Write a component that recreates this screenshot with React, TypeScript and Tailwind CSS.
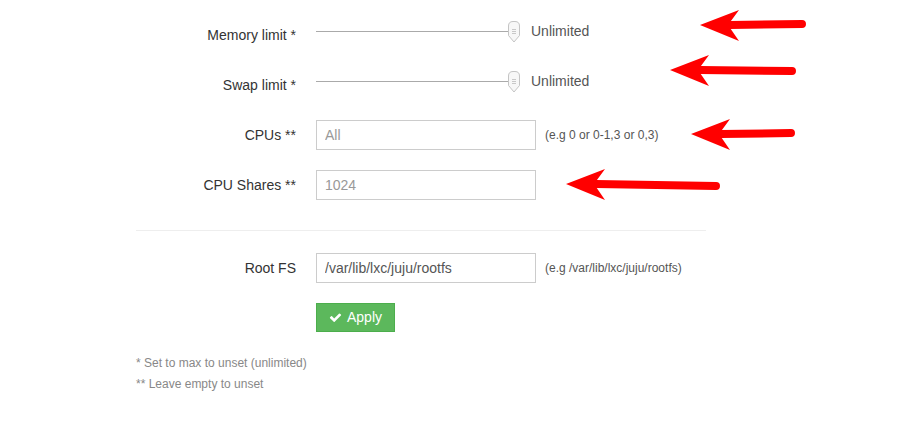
import React from 'react';

const font = { fontFamily: '"Liberation Sans", Arial, Helvetica, sans-serif' };

const Thumb = () => (
  <svg width="14" height="24" viewBox="0 0 14 24" className="absolute left-[-7px] top-[-11px]">
    <path d="M6 1.5 H8 Q12.5 1.5 12.5 6 V15.5 L7 22 L1.5 15.5 V6 Q1.5 1.5 6 1.5 Z" fill="#f7f7f7" stroke="#c4c4c4" strokeWidth="1" />
    <line x1="5" y1="9.5" x2="9" y2="9.5" stroke="#bbb" strokeWidth="0.8" />
    <line x1="5" y1="11.5" x2="9" y2="11.5" stroke="#bbb" strokeWidth="0.8" />
    <line x1="5" y1="13.5" x2="9" y2="13.5" stroke="#bbb" strokeWidth="0.8" />
  </svg>
);

const SliderRow = ({ label }: { label: string }) => (
  <div className="flex h-[30px] mb-[20px]">
    <label className="w-[180px] pr-[20px] text-right text-[14px] text-[#333] leading-[30px]">{label}</label>
    <div className="flex items-start">
      <div className="relative w-[198px] h-[1px] mt-[11px] bg-[#aaa]">
        <div className="absolute left-[198px] top-0">
          <Thumb />
        </div>
      </div>
      <span className="ml-[17px] text-[14px] text-[#555] leading-[22px]">Unlimited</span>
    </div>
  </div>
);

const InputRow = ({ label, value, placeholder, hint }: { label: string; value?: string; placeholder?: string; hint?: string }) => (
  <div className="flex h-[30px] mb-[20px] items-center">
    <label className="w-[180px] pr-[20px] text-right text-[14px] text-[#333] leading-[30px]">{label}</label>
    <input
      readOnly
      value={value ?? ''}
      placeholder={placeholder}
      className="w-[220px] h-[30px] border border-[#ccc] px-[8px] text-[14px] text-[#555] placeholder:text-[#999] outline-none"
      style={font}
    />
    {hint && <span className="ml-[9px] text-[12px] text-[#555]">{hint}</span>}
  </div>
);

const Arrow = ({ tipX, tipY, endX, endY }: { tipX: number; tipY: number; endX: number; endY: number }) => (
  <g>
    <line x1={tipX + 30} y1={tipY} x2={endX} y2={endY} stroke="#ff0000" strokeWidth="8" strokeLinecap="round" />
    <polygon points={`${tipX},${tipY} ${tipX + 39},${tipY - 15} ${tipX + 28},${tipY} ${tipX + 39},${tipY + 16}`} fill="#ff0000" />
  </g>
);

export default function App() {
  return (
    <div className="relative w-[906px] h-[431px] bg-white overflow-hidden" style={font}>
      <div className="ml-[136px] w-[570px] pt-[20px]">
        <SliderRow label="Memory limit *" />
        <SliderRow label="Swap limit *" />
        <InputRow label="CPUs **" placeholder="All" hint="(e.g 0 or 0-1,3 or 0,3)" />
        <InputRow label="CPU Shares **" placeholder="1024" />
        <div className="h-[1px] bg-[#eee] mt-[30px] mb-[22px]" />
        <InputRow label="Root FS" value="/var/lib/lxc/juju/rootfs" hint="(e.g /var/lib/lxc/juju/rootfs)" />
        <div className="pl-[180px]">
          <button className="flex items-center gap-[5px] w-[79px] h-[29px] justify-center bg-[#5cb85c] border border-[#4cae4c] text-white text-[14px]">
            <svg width="13" height="13" viewBox="0 0 1792 1792">
              <path fill="#fff" d="M1671 566q0 40-28 68l-724 724-136 136q-28 28-68 28t-68-28l-136-136-362-362q-28-28-28-68t28-68l136-136q28-28 68-28t68 28l294 295 656-657q28-28 68-28t68 28l136 136q28 28 28 68z" />
            </svg>
            Apply
          </button>
        </div>
        <div className="mt-[21px] text-[12px] text-[#888] leading-[21px]">
          <div>* Set to max to unset (unlimited)</div>
          <div>** Leave empty to unset</div>
        </div>
      </div>
      <svg className="absolute inset-0 pointer-events-none" width="906" height="431">
        <Arrow tipX={700} tipY={25} endX={802} endY={24} />
        <Arrow tipX={670} tipY={70} endX={792} endY={71} />
        <Arrow tipX={691} tipY={134} endX={791} endY={133} />
        <Arrow tipX={566} tipY={184} endX={716} endY={186} />
      </svg>
    </div>
  );
}
